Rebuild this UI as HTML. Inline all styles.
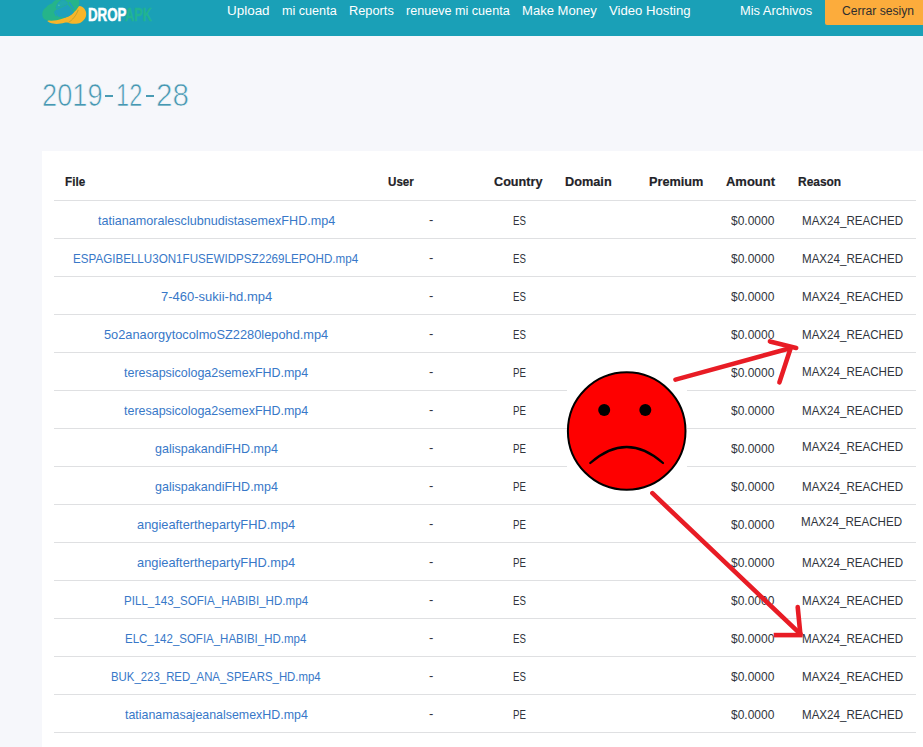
<!DOCTYPE html>
<html><head><meta charset="utf-8"><title>DropAPK</title>
<style>
html,body{margin:0;padding:0}
body{width:923px;height:747px;overflow:hidden;position:relative;background:#f6f7fb;font-family:"Liberation Sans", sans-serif}
.nav{position:absolute;left:0;top:0;width:923px;height:36px;background:#1aa0b7}
.btn{position:absolute;left:825px;top:0;width:98px;height:24.6px;background:#fcac3c;border-radius:0 0 0 2px}
.card{position:absolute;left:42px;top:151px;width:881px;height:596px;background:#fff}
.hl{position:absolute;left:54px;width:862px;height:1px;background:#dfe0e2}
.t{position:absolute;white-space:pre;line-height:1;transform-origin:0 50%;display:block}
svg{position:absolute;left:0;top:0}
</style></head><body>
<div class="nav"></div><div class="btn"></div>
<div class="card"></div><div style="position:absolute;left:104.5px;top:94.9px;width:8.7px;height:2.2px;background:#4a9bb4"></div><div style="position:absolute;left:145.5px;top:94.9px;width:8.7px;height:2.2px;background:#4a9bb4"></div>
<div class="hl" style="top:200px"></div><div class="hl" style="top:238px"></div><div class="hl" style="top:276px"></div><div class="hl" style="top:314px"></div><div class="hl" style="top:352px"></div><div class="hl" style="top:390px"></div><div class="hl" style="top:428px"></div><div class="hl" style="top:466px"></div><div class="hl" style="top:504px"></div><div class="hl" style="top:542px"></div><div class="hl" style="top:580px"></div><div class="hl" style="top:618px"></div><div class="hl" style="top:656px"></div><div class="hl" style="top:694px"></div><div class="hl" style="top:732px"></div>
<svg width="160" height="36" viewBox="0 0 160 36">
<path d="M47.3 21.1 C49 22.5 50.8 23.3 53 23.6 C57 24.3 61 23.7 64.4 22.8 C66 22.3 67.2 22.3 68.2 22.8 C70 23.6 72.5 23.8 74.5 23.7 C77 23.7 79 23.3 80.5 22.7 C83 21.5 85 19 85.8 16.8 C86.5 14.5 86.3 12.5 85.5 10.8 C84.7 9 83.9 8.1 82.5 7.1 C81.5 6.3 80.5 6 79.4 6 L70 10 L52 17 Z" fill="#f7b52a"/>
<path d="M68.4 22.5 C72.3 20.3 76.2 15.5 78.3 9.8" fill="none" stroke="#8e8a2e" stroke-width="0.6" opacity="0.75"/>
<path d="M55.7 0 C54 1 52.6 2.4 52 3.5 C49 4.4 46.8 6.2 46 7.6 C43 9.2 41.8 13 42.4 15.7 C43 19 45.5 20.4 48 20.5 C53 21 58 20.2 60.6 19.2 C64 18 66.5 17.2 68.2 16.4 C71 14.7 73 13.1 74.7 11.5 C77 9.2 78.5 7.2 78.8 5.4 C79.3 3 79.2 1.5 79 0 Z" fill="#25b48a"/>
<path d="M54.6 10.8 L67.9 4.4 L73.8 12.6 C71 15.6 68 17.1 64.5 17.7 L58.3 16.7 Z" fill="#1fa0bc"/>
<path d="M56.3 8.6 C56.4 4.5 59 1 62 0.4 C65 0 67 1.8 67.7 3.5 Z" fill="#22a9ad" stroke="#1fa0bc" stroke-width="0.8"/>
<path d="M69.6 2.7 L73.4 8.6" fill="none" stroke="#1fa0bc" stroke-width="1.7" stroke-linecap="round"/>
<path d="M54.7 12.2 L56.2 15.6" fill="none" stroke="#1fa0bc" stroke-width="1.4" stroke-linecap="round"/>
<circle cx="58.9" cy="5.2" r="0.7" fill="#55c4b6"/>
</svg>

<span class="t" style="left:227.02px;top:3.80px;font-size:13.7px;font-weight:400;color:#ffffff;transform:scaleX(0.9817);">Upload</span><span class="t" style="left:282.00px;top:3.80px;font-size:13.7px;font-weight:400;color:#ffffff;transform:scaleX(0.9208);">mi cuenta</span><span class="t" style="left:349.07px;top:3.80px;font-size:13.7px;font-weight:400;color:#ffffff;transform:scaleX(0.9345);">Reports</span><span class="t" style="left:406.00px;top:3.80px;font-size:13.7px;font-weight:400;color:#ffffff;transform:scaleX(0.9204);">renueve mi cuenta</span><span class="t" style="left:522.05px;top:3.80px;font-size:13.7px;font-weight:400;color:#ffffff;transform:scaleX(0.9547);">Make Money</span><span class="t" style="left:609.00px;top:3.80px;font-size:13.7px;font-weight:400;color:#ffffff;transform:scaleX(0.9602);">Video Hosting</span><span class="t" style="left:740.06px;top:3.80px;font-size:13.7px;font-weight:400;color:#ffffff;transform:scaleX(0.9384);">Mis Archivos</span><span class="t" style="left:841.50px;top:3.80px;font-size:13.7px;font-weight:400;color:#2e2e2e;transform:scaleX(0.8852);">Cerrar sesiyn</span><span class="t" style="left:88.00px;top:5.50px;font-size:18.9px;font-weight:700;color:#ffffff;transform:scaleX(0.7041);-webkit-text-stroke:0.5px #fff">DROP</span><span class="t" style="left:125.40px;top:5.50px;font-size:18.9px;font-weight:700;color:#21b491;transform:scaleX(0.6734);-webkit-text-stroke:0.3px #21b491">APK</span><span class="t" style="left:41.65px;top:79.11px;font-size:32px;font-weight:400;color:#4698b2;transform:scaleX(0.8503);-webkit-text-stroke:0.7px #f6f7fb">2019</span><span class="t" style="left:116.42px;top:79.11px;font-size:32px;font-weight:400;color:#4698b2;transform:scaleX(0.7379);-webkit-text-stroke:0.7px #f6f7fb">12</span><span class="t" style="left:155.97px;top:79.11px;font-size:32px;font-weight:400;color:#4698b2;transform:scaleX(0.9261);-webkit-text-stroke:0.7px #f6f7fb">28</span><span class="t" style="left:64.80px;top:175.26px;font-size:13.4px;font-weight:700;color:#1f2328;transform:scaleX(0.8753);-webkit-text-stroke:0.2px #1f2328">File</span><span class="t" style="left:387.50px;top:175.26px;font-size:13.4px;font-weight:700;color:#1f2328;transform:scaleX(0.8670);-webkit-text-stroke:0.2px #1f2328">User</span><span class="t" style="left:494.00px;top:175.26px;font-size:13.4px;font-weight:700;color:#1f2328;transform:scaleX(0.9445);-webkit-text-stroke:0.2px #1f2328">Country</span><span class="t" style="left:564.50px;top:175.26px;font-size:13.4px;font-weight:700;color:#1f2328;transform:scaleX(0.9505);-webkit-text-stroke:0.2px #1f2328">Domain</span><span class="t" style="left:649.00px;top:175.26px;font-size:13.4px;font-weight:700;color:#1f2328;transform:scaleX(0.9495);-webkit-text-stroke:0.2px #1f2328">Premium</span><span class="t" style="left:726.00px;top:175.26px;font-size:13.4px;font-weight:700;color:#1f2328;transform:scaleX(0.9684);-webkit-text-stroke:0.2px #1f2328">Amount</span><span class="t" style="left:798.00px;top:175.26px;font-size:13.4px;font-weight:700;color:#1f2328;transform:scaleX(0.8923);-webkit-text-stroke:0.2px #1f2328">Reason</span><span class="t" style="left:98.00px;top:213.50px;font-size:13px;font-weight:400;color:#3878c8;transform:scaleX(0.9685);">tatianamoralesclubnudistasemexFHD.mp4</span><span class="t" style="left:429.00px;top:212.60px;font-size:13px;font-weight:400;color:#30343c;transform:scaleX(1.0000);">-</span><span class="t" style="left:512.56px;top:213.50px;font-size:13px;font-weight:400;color:#30343c;transform:scaleX(0.7438);">ES</span><span class="t" style="left:731.00px;top:213.50px;font-size:13px;font-weight:400;color:#30343c;transform:scaleX(0.9238);">$0.0000</span><span class="t" style="left:802.01px;top:213.50px;font-size:13px;font-weight:400;color:#30343c;transform:scaleX(0.8908);">MAX24_REACHED</span><span class="t" style="left:73.11px;top:251.50px;font-size:13px;font-weight:400;color:#3878c8;transform:scaleX(0.8935);">ESPAGIBELLU3ON1FUSEWIDPSZ2269LEPOHD.mp4</span><span class="t" style="left:429.00px;top:250.60px;font-size:13px;font-weight:400;color:#30343c;transform:scaleX(1.0000);">-</span><span class="t" style="left:512.56px;top:251.50px;font-size:13px;font-weight:400;color:#30343c;transform:scaleX(0.7438);">ES</span><span class="t" style="left:731.00px;top:251.50px;font-size:13px;font-weight:400;color:#30343c;transform:scaleX(0.9238);">$0.0000</span><span class="t" style="left:802.01px;top:251.50px;font-size:13px;font-weight:400;color:#30343c;transform:scaleX(0.8908);">MAX24_REACHED</span><span class="t" style="left:161.00px;top:289.50px;font-size:13px;font-weight:400;color:#3878c8;transform:scaleX(0.9996);">7-460-sukii-hd.mp4</span><span class="t" style="left:429.00px;top:288.60px;font-size:13px;font-weight:400;color:#30343c;transform:scaleX(1.0000);">-</span><span class="t" style="left:512.56px;top:289.50px;font-size:13px;font-weight:400;color:#30343c;transform:scaleX(0.7438);">ES</span><span class="t" style="left:731.00px;top:289.50px;font-size:13px;font-weight:400;color:#30343c;transform:scaleX(0.9238);">$0.0000</span><span class="t" style="left:802.01px;top:289.50px;font-size:13px;font-weight:400;color:#30343c;transform:scaleX(0.8908);">MAX24_REACHED</span><span class="t" style="left:104.00px;top:327.50px;font-size:13px;font-weight:400;color:#3878c8;transform:scaleX(0.9849);">5o2anaorgytocolmoSZ2280lepohd.mp4</span><span class="t" style="left:429.00px;top:326.60px;font-size:13px;font-weight:400;color:#30343c;transform:scaleX(1.0000);">-</span><span class="t" style="left:512.56px;top:327.50px;font-size:13px;font-weight:400;color:#30343c;transform:scaleX(0.7438);">ES</span><span class="t" style="left:731.00px;top:327.50px;font-size:13px;font-weight:400;color:#30343c;transform:scaleX(0.9238);">$0.0000</span><span class="t" style="left:802.01px;top:327.50px;font-size:13px;font-weight:400;color:#30343c;transform:scaleX(0.8908);">MAX24_REACHED</span><span class="t" style="left:124.00px;top:365.50px;font-size:13px;font-weight:400;color:#3878c8;transform:scaleX(0.9585);">teresapsicologa2semexFHD.mp4</span><span class="t" style="left:429.00px;top:364.60px;font-size:13px;font-weight:400;color:#30343c;transform:scaleX(1.0000);">-</span><span class="t" style="left:512.56px;top:365.50px;font-size:13px;font-weight:400;color:#30343c;transform:scaleX(0.7438);">PE</span><span class="t" style="left:731.00px;top:365.50px;font-size:13px;font-weight:400;color:#30343c;transform:scaleX(0.9238);">$0.0000</span><span class="t" style="left:802.01px;top:364.90px;font-size:13px;font-weight:400;color:#30343c;transform:scaleX(0.8908);">MAX24_REACHED</span><span class="t" style="left:124.00px;top:403.50px;font-size:13px;font-weight:400;color:#3878c8;transform:scaleX(0.9585);">teresapsicologa2semexFHD.mp4</span><span class="t" style="left:429.00px;top:402.60px;font-size:13px;font-weight:400;color:#30343c;transform:scaleX(1.0000);">-</span><span class="t" style="left:512.56px;top:403.50px;font-size:13px;font-weight:400;color:#30343c;transform:scaleX(0.7438);">PE</span><span class="t" style="left:731.00px;top:403.50px;font-size:13px;font-weight:400;color:#30343c;transform:scaleX(0.9238);">$0.0000</span><span class="t" style="left:802.01px;top:403.50px;font-size:13px;font-weight:400;color:#30343c;transform:scaleX(0.8908);">MAX24_REACHED</span><span class="t" style="left:154.70px;top:441.50px;font-size:13px;font-weight:400;color:#3878c8;transform:scaleX(0.9611);">galispakandiFHD.mp4</span><span class="t" style="left:429.00px;top:440.60px;font-size:13px;font-weight:400;color:#30343c;transform:scaleX(1.0000);">-</span><span class="t" style="left:512.56px;top:441.50px;font-size:13px;font-weight:400;color:#30343c;transform:scaleX(0.7438);">PE</span><span class="t" style="left:731.00px;top:441.50px;font-size:13px;font-weight:400;color:#30343c;transform:scaleX(0.9238);">$0.0000</span><span class="t" style="left:802.01px;top:439.50px;font-size:13px;font-weight:400;color:#30343c;transform:scaleX(0.8908);">MAX24_REACHED</span><span class="t" style="left:154.70px;top:479.50px;font-size:13px;font-weight:400;color:#3878c8;transform:scaleX(0.9611);">galispakandiFHD.mp4</span><span class="t" style="left:429.00px;top:478.60px;font-size:13px;font-weight:400;color:#30343c;transform:scaleX(1.0000);">-</span><span class="t" style="left:512.56px;top:479.50px;font-size:13px;font-weight:400;color:#30343c;transform:scaleX(0.7438);">PE</span><span class="t" style="left:731.00px;top:479.50px;font-size:13px;font-weight:400;color:#30343c;transform:scaleX(0.9238);">$0.0000</span><span class="t" style="left:802.01px;top:479.50px;font-size:13px;font-weight:400;color:#30343c;transform:scaleX(0.8908);">MAX24_REACHED</span><span class="t" style="left:137.00px;top:517.50px;font-size:13px;font-weight:400;color:#3878c8;transform:scaleX(0.9864);">angieafterthepartyFHD.mp4</span><span class="t" style="left:429.00px;top:516.60px;font-size:13px;font-weight:400;color:#30343c;transform:scaleX(1.0000);">-</span><span class="t" style="left:512.56px;top:517.50px;font-size:13px;font-weight:400;color:#30343c;transform:scaleX(0.7438);">PE</span><span class="t" style="left:731.00px;top:517.50px;font-size:13px;font-weight:400;color:#30343c;transform:scaleX(0.9238);">$0.0000</span><span class="t" style="left:801.31px;top:514.50px;font-size:13px;font-weight:400;color:#30343c;transform:scaleX(0.8908);">MAX24_REACHED</span><span class="t" style="left:137.00px;top:555.50px;font-size:13px;font-weight:400;color:#3878c8;transform:scaleX(0.9864);">angieafterthepartyFHD.mp4</span><span class="t" style="left:429.00px;top:554.60px;font-size:13px;font-weight:400;color:#30343c;transform:scaleX(1.0000);">-</span><span class="t" style="left:512.56px;top:555.50px;font-size:13px;font-weight:400;color:#30343c;transform:scaleX(0.7438);">PE</span><span class="t" style="left:731.00px;top:555.50px;font-size:13px;font-weight:400;color:#30343c;transform:scaleX(0.9238);">$0.0000</span><span class="t" style="left:802.01px;top:555.50px;font-size:13px;font-weight:400;color:#30343c;transform:scaleX(0.8908);">MAX24_REACHED</span><span class="t" style="left:124.11px;top:593.50px;font-size:13px;font-weight:400;color:#3878c8;transform:scaleX(0.8908);">PILL_143_SOFIA_HABIBI_HD.mp4</span><span class="t" style="left:429.00px;top:592.60px;font-size:13px;font-weight:400;color:#30343c;transform:scaleX(1.0000);">-</span><span class="t" style="left:512.56px;top:593.50px;font-size:13px;font-weight:400;color:#30343c;transform:scaleX(0.7438);">ES</span><span class="t" style="left:731.00px;top:593.50px;font-size:13px;font-weight:400;color:#30343c;transform:scaleX(0.9238);">$0.0000</span><span class="t" style="left:802.01px;top:593.50px;font-size:13px;font-weight:400;color:#30343c;transform:scaleX(0.8908);">MAX24_REACHED</span><span class="t" style="left:125.12px;top:631.50px;font-size:13px;font-weight:400;color:#3878c8;transform:scaleX(0.8834);">ELC_142_SOFIA_HABIBI_HD.mp4</span><span class="t" style="left:429.00px;top:630.60px;font-size:13px;font-weight:400;color:#30343c;transform:scaleX(1.0000);">-</span><span class="t" style="left:512.56px;top:631.50px;font-size:13px;font-weight:400;color:#30343c;transform:scaleX(0.7438);">ES</span><span class="t" style="left:731.00px;top:631.50px;font-size:13px;font-weight:400;color:#30343c;transform:scaleX(0.9238);">$0.0000</span><span class="t" style="left:802.01px;top:631.50px;font-size:13px;font-weight:400;color:#30343c;transform:scaleX(0.8908);">MAX24_REACHED</span><span class="t" style="left:111.12px;top:669.50px;font-size:13px;font-weight:400;color:#3878c8;transform:scaleX(0.8767);">BUK_223_RED_ANA_SPEARS_HD.mp4</span><span class="t" style="left:429.00px;top:668.60px;font-size:13px;font-weight:400;color:#30343c;transform:scaleX(1.0000);">-</span><span class="t" style="left:512.56px;top:669.50px;font-size:13px;font-weight:400;color:#30343c;transform:scaleX(0.7438);">ES</span><span class="t" style="left:731.00px;top:669.50px;font-size:13px;font-weight:400;color:#30343c;transform:scaleX(0.9238);">$0.0000</span><span class="t" style="left:802.01px;top:669.50px;font-size:13px;font-weight:400;color:#30343c;transform:scaleX(0.8908);">MAX24_REACHED</span><span class="t" style="left:125.00px;top:707.50px;font-size:13px;font-weight:400;color:#3878c8;transform:scaleX(0.9548);">tatianamasajeanalsemexHD.mp4</span><span class="t" style="left:429.00px;top:706.60px;font-size:13px;font-weight:400;color:#30343c;transform:scaleX(1.0000);">-</span><span class="t" style="left:512.56px;top:707.50px;font-size:13px;font-weight:400;color:#30343c;transform:scaleX(0.7438);">PE</span><span class="t" style="left:731.00px;top:707.50px;font-size:13px;font-weight:400;color:#30343c;transform:scaleX(0.9238);">$0.0000</span><span class="t" style="left:802.01px;top:707.50px;font-size:13px;font-weight:400;color:#30343c;transform:scaleX(0.8908);">MAX24_REACHED</span>
<div style="position:absolute;left:567px;top:353px;width:120px;height:151px;background:#fff"></div>
<svg width="923" height="747" viewBox="0 0 923 747">
<g fill="none" stroke="#e81c25" stroke-width="4.6" stroke-linecap="round" stroke-linejoin="round">
<path d="M675.5 379.6 L790 348.3"/>
<path d="M769.9 341.4 L796.2 347.9"/>
<path d="M790.6 348.2 L779.4 382.4"/>
<path d="M652.4 493.2 L800 633.6"/>
<path d="M797.7 607 L800.4 634.5"/>
<path d="M773.7 635.1 L802.6 635.1" stroke-linecap="butt"/>
</g>
<circle cx="626.7" cy="431" r="58.8" fill="#fe0000" stroke="#000" stroke-width="2"/>
<circle cx="604.2" cy="410" r="6" fill="#000"/>
<circle cx="645.3" cy="410" r="6" fill="#000"/>
<path d="M590.3 463 Q626.7 431 663 463" fill="none" stroke="#000" stroke-width="2.3" stroke-linecap="round"/>
</svg>

</body></html>
